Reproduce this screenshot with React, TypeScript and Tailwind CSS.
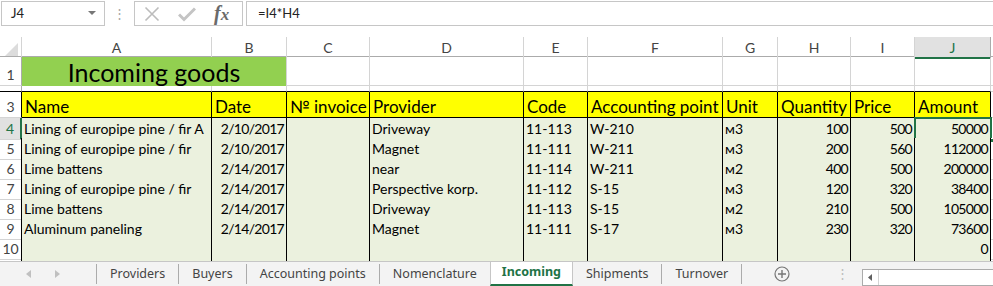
import React from 'react';

const COLS = ['A', 'B', 'C', 'D', 'E', 'F', 'G', 'H', 'I', 'J'];
const GRID =
  'grid grid-cols-[22px_190px_75px_83px_154px_64px_135px_55px_73px_64px_76px_1fr]';

const HEADERS = ['Name', 'Date', '№ invoice', 'Provider', 'Code', 'Accounting point', 'Unit', 'Quantity', 'Price', 'Amount'];

const DATA: string[][] = [
  ['Lining of europipe pine / fir A', '2/10/2017', '', 'Driveway', '11-113', 'W-210', 'м3', '100', '500', '50000'],
  ['Lining of europipe pine / fir', '2/10/2017', '', 'Magnet', '11-111', 'W-211', 'м3', '200', '560', '112000'],
  ['Lime battens', '2/14/2017', '', 'near', '11-114', 'W-211', 'м2', '400', '500', '200000'],
  ['Lining of europipe pine / fir', '2/14/2017', '', 'Perspective korp.', '11-112', 'S-15', 'м3', '120', '320', '38400'],
  ['Lime battens', '2/14/2017', '', 'Driveway', '11-113', 'S-15', 'м2', '210', '500', '105000'],
  ['Aluminum paneling', '2/14/2017', '', 'Magnet', '11-111', 'S-17', 'м3', '230', '320', '73600'],
  ['', '', '', '', '', '', '', '', '', '0'],
  ['', '', '', '', '', '', '', '', '', ''],
];

// columns holding numbers / dates are right aligned
const RIGHT = [false, true, false, false, false, false, false, true, true, true];

function FormulaBar() {
  return (
    <div className="h-[37px] flex items-start pt-px bg-white">
      <div className="ml-px w-[104px] h-[25px] border border-[#c6c6c6] flex items-center justify-between pl-[9px] pr-[8px] text-[13px] text-[#222]">
        <span>J4</span>
        <svg width="8" height="5" viewBox="0 0 8 5">
          <polygon points="0,0 8,0 4,4" fill="#777" />
        </svg>
      </div>
      <div className="w-[29px] h-[25px] flex items-center justify-center text-[#a6a6a6] text-[13px]">⋮</div>
      <div className="w-[109px] h-[25px] border border-[#c6c6c6] flex items-center gap-[18px] pl-[9px]">
        <svg width="16" height="16" viewBox="0 0 16 16">
          <path d="M1.5 1.5 L14.5 14.5 M14.5 1.5 L1.5 14.5" stroke="#bcbcbc" strokeWidth="1.6" fill="none" />
        </svg>
        <svg width="18" height="16" viewBox="0 0 18 16">
          <path d="M1 8.5 L6 13.5 L17 2.5" stroke="#c4c4c4" strokeWidth="3" fill="none" />
        </svg>
        <span className="font-['Liberation_Serif',serif] italic font-bold text-[20px] text-[#6a6a6a] leading-none -mt-[2px]">
          f<span className="text-[17px]">x</span>
        </span>
      </div>
      <div className="ml-[3px] flex-1 h-[25px] border border-[#c6c6c6] border-r-0 flex items-center pl-[11px] text-[13px] text-[#222]">
        =I4*H4
      </div>
    </div>
  );
}

function ColumnHeader() {
  return (
    <div className={`${GRID} h-[20px] border-b border-[#ababab] text-[14px] text-[#444]`}>
      <div className="border-r border-[#d4d4d4] flex items-end justify-end pr-[3px] pb-[2px]">
        <svg width="13" height="13" viewBox="0 0 13 13">
          <polygon points="13,0 13,13 0,13" fill="#dcdcdc" />
        </svg>
      </div>
      {COLS.map((c) => (
        <div
          key={c}
          className={
            c === 'J'
              ? 'relative bg-[#e1e1e1] border-r border-[#ababab] flex items-center justify-center text-[#217346]'
              : 'border-r border-[#d4d4d4] flex items-center justify-center'
          }
        >
          {c}
          {c === 'J' && <div className="absolute left-0 right-0 -bottom-px h-[2px] bg-[#217346]" />}
        </div>
      ))}
      <div />
    </div>
  );
}

function RowHead({ n, active, edge }: { n?: number; active?: boolean; edge?: boolean }) {
  const base = 'border-b border-[#d4d4d4] flex items-end justify-center text-[14px] leading-none pb-[3px] overflow-hidden';
  if (active)
    return <div className={`${base} bg-[#e1e1e1] border-r-2 border-r-[#217346] text-[#217346]`}>{n}</div>;
  return (
    <div className={`${base} text-[#444] border-r ${edge ? 'border-r-black' : 'border-r-[#ababab]'}`}>{n}</div>
  );
}

function TitleRows() {
  return (
    <>
      <div className={`${GRID} h-[29px]`}>
        <RowHead n={1} />
        <div className="col-span-2 bg-[#92d050] border-r border-[#d4d4d4] flex items-end justify-center pb-[1px] text-[25px] leading-none">
          Incoming goods
        </div>
        {COLS.slice(2).map((c) => (
          <div key={c} className="border-r border-b border-[#d4d4d4]" />
        ))}
        <div className="border-b border-[#d4d4d4]" />
      </div>
      <div className={`${GRID} h-[6px]`}>
        <div className="border-r border-[#ababab] border-b border-b-black overflow-hidden" />
        {COLS.map((c) => (
          <div key={c} className="border-r border-[#d4d4d4] border-b border-b-black" />
        ))}
        <div className="border-b border-[#d4d4d4]" />
      </div>
    </>
  );
}

function HeaderRow() {
  return (
    <div className={`${GRID} h-[26px]`}>
      <RowHead n={3} edge />
      {HEADERS.map((h) => (
        <div
          key={h}
          className="bg-[#ffff00] border-r border-b border-black flex items-end pl-[3px] pb-[2px] text-[17px] leading-none whitespace-nowrap overflow-hidden"
        >
          {h}
        </div>
      ))}
      <div className="border-b border-[#d4d4d4]" />
    </div>
  );
}

function DataRow({ n, row }: { n: number; row: string[] }) {
  const active = n === 4;
  return (
    <div className={`${GRID} h-[20px]`}>
      <RowHead n={n < 11 ? n : undefined} active={active} edge />
      {row.map((v, i) => (
        <div
          key={i}
          className={`relative bg-[#ebf1de] border-r border-b border-black flex items-center text-[14px] whitespace-nowrap px-[2px] ${
            RIGHT[i] ? 'justify-end tracking-[-0.7px]' : 'justify-start'
          }`}
        >
          {v}
          {active && i === 9 && (
            <div className="absolute -left-px -top-px -right-[2px] -bottom-[2px] border-2 border-[#217346]">
              <div className="absolute -right-[4px] -bottom-[4px] w-[5px] h-[5px] bg-[#217346] border border-white" />
            </div>
          )}
        </div>
      ))}
      <div className="border-b border-[#d4d4d4]" />
    </div>
  );
}

function Tab({ label, active }: { label: string; active?: boolean }) {
  if (active)
    return (
      <div className="h-full -mt-px bg-white border-x border-[#c6c6c6] border-b-2 border-b-[#217346] px-[11px] flex items-center font-bold text-[#217346]">
        {label}
      </div>
    );
  return <div className="h-[20px] border-r border-[#ababab] px-[13px] flex items-center text-[#444]">{label}</div>;
}

function TabBar() {
  return (
    <div className="h-[25px] bg-[#f3f3f3] border-t border-[#c6c6c6] flex items-center text-[12.5px] font-['Noto_Sans',sans-serif]">
      <div className="w-[97px] h-[20px] border-r border-[#ababab] flex items-center gap-[22px] pl-[26px]">
        <svg width="6" height="8" viewBox="0 0 6 8">
          <polygon points="5,0 5,8 0,4" fill="#c0c0c0" />
        </svg>
        <svg width="6" height="8" viewBox="0 0 6 8">
          <polygon points="1,0 1,8 6,4" fill="#c0c0c0" />
        </svg>
      </div>
      <Tab label="Providers" />
      <Tab label="Buyers" />
      <Tab label="Accounting points" />
      <div className="h-[20px] px-[13px] flex items-center text-[#444]">Nomenclature</div>
      <Tab label="Incoming" active />
      <Tab label="Shipments" />
      <Tab label="Turnover" />
      <div className="w-[80px] flex items-center justify-center">
        <svg width="16" height="16" viewBox="0 0 16 16">
          <circle cx="8" cy="8" r="7" stroke="#767676" strokeWidth="1.2" fill="none" />
          <path d="M8 4 V12 M4 8 H12" stroke="#767676" strokeWidth="1.4" />
        </svg>
      </div>
      <div className="w-[40px] flex items-center justify-center text-[#bcbcbc] text-[13px]">⋮</div>
      <div className="flex-1 h-[17px] mt-[6px] bg-white border border-[#ababab] border-r-0 flex">
        <div className="w-[16px] border-r border-[#d4d4d4] flex items-center justify-center">
          <svg width="5" height="7" viewBox="0 0 5 7">
            <polygon points="4,0 4,7 0,3.5" fill="#606060" />
          </svg>
        </div>
      </div>
    </div>
  );
}

export default function App() {
  return (
    <div className="w-[993px] h-[286px] overflow-hidden bg-white font-['Lato',sans-serif] text-black">
      <FormulaBar />
      <div className="h-[224px] overflow-hidden">
        <ColumnHeader />
        <TitleRows />
        <HeaderRow />
        {DATA.map((r, i) => (
          <DataRow key={i} n={i + 4} row={r} />
        ))}
      </div>
      <TabBar />
    </div>
  );
}
